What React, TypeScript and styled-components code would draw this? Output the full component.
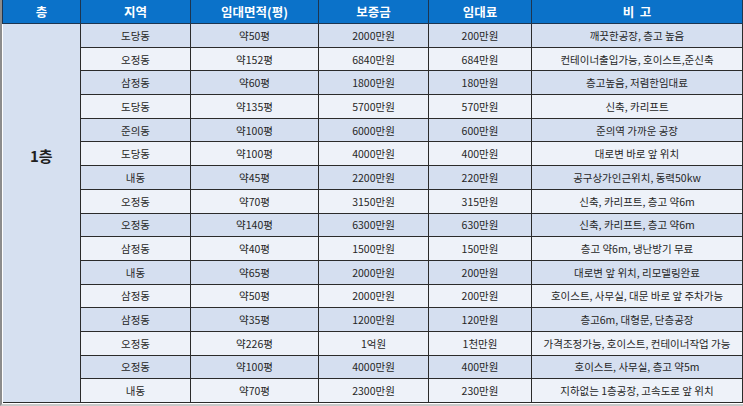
import styled, { createGlobalStyle } from 'styled-components';

const GlobalStyle = createGlobalStyle`
  body {
    margin: 0;
    background: #ffffff;
    font-family: "Noto Sans CJK KR", "Noto Sans", sans-serif;
  }
`;

const Frame = styled.div`
  width: 743px;
  height: 406px;
  box-sizing: border-box;
  border-left: 2px solid #8c8c8c;
  border-bottom: 2px solid #c8c8c8;
  overflow: hidden;
`;

const Table = styled.table`
  width: 740px;
  border-collapse: collapse;
  table-layout: fixed;
  color: #262626;
`;

const HeadCell = styled.th`
  height: 23px;
  padding: 0;
  background: #0b72c9;
  color: #ffffff;
  font-size: 12.5px;
  font-weight: 700;
  text-align: center;
  white-space: pre;
  border: 1px solid #1d3550;
  border-top: none;
`;

const Row = styled.tr<{ $shade: boolean }>`
  height: 23.7px;
  background: ${(p) => (p.$shade ? '#d5dff0' : '#eef2f9')};
`;

const Cell = styled.td`
  padding: 0;
  font-size: 10.5px;
  text-align: center;
  border: 1px solid #2b2b2b;
  white-space: nowrap;
`;

const FloorCell = styled.td`
  padding: 121px 0 0;
  vertical-align: top;
  background: #d6e0f0;
  font-size: 15px;
  line-height: 22px;
  font-weight: 700;
  text-align: center;
  border: 1px solid #2b2b2b;
  border-left: none;
  color: #1f1f1f;
`;

type Listing = [string, string, string, string, string];

const rows: Listing[] = [
  ['도당동', '약50평', '2000만원', '200만원', '깨끗한공장, 층고 높음'],
  ['오정동', '약152평', '6840만원', '684만원', '컨테이너출입가능, 호이스트,준신축'],
  ['삼정동', '약60평', '1800만원', '180만원', '층고높음, 저렴한임대료'],
  ['도당동', '약135평', '5700만원', '570만원', '신축, 카리프트'],
  ['준의동', '약100평', '6000만원', '600만원', '준의역 가까운 공장'],
  ['도당동', '약100평', '4000만원', '400만원', '대로변 바로 앞 위치'],
  ['내동', '약45평', '2200만원', '220만원', '공구상가인근위치, 동력50kw'],
  ['오정동', '약70평', '3150만원', '315만원', '신축, 카리프트, 층고 약6m'],
  ['오정동', '약140평', '6300만원', '630만원', '신축, 카리프트, 층고 약6m'],
  ['삼정동', '약40평', '1500만원', '150만원', '층고 약6m, 냉난방기 무료'],
  ['내동', '약65평', '2000만원', '200만원', '대로변 앞 위치, 리모델링완료'],
  ['삼정동', '약50평', '2000만원', '200만원', '호이스트, 사무실, 대문 바로 앞 주차가능'],
  ['삼정동', '약35평', '1200만원', '120만원', '층고6m, 대형문, 단층공장'],
  ['오정동', '약226평', '1억원', '1천만원', '가격조정가능, 호이스트, 컨테이너작업 가능'],
  ['오정동', '약100평', '4000만원', '400만원', '호이스트, 사무실, 층고 약5m'],
  ['내동', '약70평', '2300만원', '230만원', '지하없는 1층공장, 고속도로 앞 위치'],
];

const widths = [78, 110, 128, 110, 103, 211];
const heads = ['층', '지역', '임대면적(평)', '보증금', '임대료', '비  고'];

const App = () => (
  <>
    <GlobalStyle />
    <Frame>
      <Table>
        <colgroup>
          {widths.map((w, i) => (
            <col key={i} style={{ width: w }} />
          ))}
        </colgroup>
        <thead>
          <tr>
            {heads.map((h) => (
              <HeadCell key={h}>{h}</HeadCell>
            ))}
          </tr>
        </thead>
        <tbody>
          {rows.map((r, i) => (
            <Row key={i} $shade={i % 2 === 0}>
              {i === 0 && <FloorCell rowSpan={rows.length}>1층</FloorCell>}
              {r.map((v, j) => (
                <Cell key={j}>{v}</Cell>
              ))}
            </Row>
          ))}
        </tbody>
      </Table>
    </Frame>
  </>
);

export default App;
